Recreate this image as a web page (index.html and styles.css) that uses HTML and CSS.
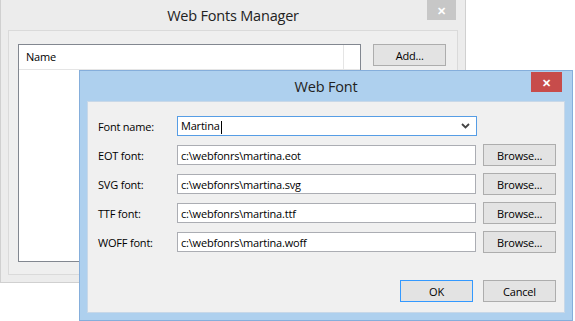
FILE: index.html
```html
<!DOCTYPE html>
<html lang="en">

<head>
    <meta charset="UTF-8">
    <title>Web Fonts Manager</title>
    <link rel="stylesheet" href="styles.css">
</head>

<body>
    <div class="desktop">
        <div class="window manager">
            <div class="titlebar">
                <span class="title">Web Fonts Manager</span>
                <span class="close">&#x2715;</span>
            </div>
            <div class="client">
                <div class="list">
                    <div class="list-head">
                        <span class="col">Name</span>
                        <span class="col-rest"></span>
                    </div>
                </div>
                <button type="button" class="btn add">Add...</button>
            </div>
        </div>

        <div class="window dialog">
            <div class="titlebar">
                <span class="title">Web Font</span>
                <span class="close">&#x2715;</span>
            </div>
            <div class="client">
                <div class="row">
                    <label for="fontName">Font name:</label>
                    <div class="combo">
                        <span class="value">Martina<span class="caret"></span></span>
                        <svg class="arrow" width="9" height="6" viewBox="0 0 9 6">
                            <path d="M1 1 L4.5 4.5 L8 1" fill="none" stroke="#444" stroke-width="1.8" />
                        </svg>
                    </div>
                </div>
                <div class="row">
                    <label>EOT font:</label>
                    <input type="text" value="c:\webfonrs\martina.eot">
                    <button type="button" class="btn">Browse...</button>
                </div>
                <div class="row">
                    <label>SVG font:</label>
                    <input type="text" value="c:\webfonrs\martina.svg">
                    <button type="button" class="btn">Browse...</button>
                </div>
                <div class="row">
                    <label>TTF font:</label>
                    <input type="text" value="c:\webfonrs\martina.ttf">
                    <button type="button" class="btn">Browse...</button>
                </div>
                <div class="row">
                    <label>WOFF font:</label>
                    <input type="text" value="c:\webfonrs\martina.woff">
                    <button type="button" class="btn">Browse...</button>
                </div>
                <div class="actions">
                    <button type="button" class="btn ok">OK</button>
                    <button type="button" class="btn">Cancel</button>
                </div>
            </div>
        </div>
    </div>
</body>

</html>
```

FILE: styles.css
```css
body {
    margin: 0;
    background: #fff;
    font-family: "Open Sans", "Noto Sans", Arial, sans-serif;
    font-size: 11px;
    letter-spacing: -0.2px;
    color: #000;
}

.desktop {
    position: relative;
    width: 575px;
    height: 321px;
    overflow: hidden;
}

.window {
    position: absolute;
    box-sizing: border-box;
    display: flex;
    flex-direction: column;
}

.titlebar {
    position: relative;
    display: flex;
    justify-content: center;
    align-items: center;
}

.title {
    font-size: 14.5px;
    color: #222;
}

.close {
    position: absolute;
    top: 0;
    display: flex;
    justify-content: center;
    align-items: center;
    color: #fff;
    font-size: 11px;
    font-weight: bold;
}

/* back window */

.manager {
    left: 0;
    top: 0;
    width: 466px;
    height: 283px;
    background: #ececec;
    border: 1px solid #d0d0d0;
    border-top: none;
    padding: 0 7px 7px 7px;
}

.manager .titlebar {
    height: 30px;
}

.manager .close {
    right: 2px;
    width: 29px;
    height: 20px;
    background: #c7c7c7;
}

.manager .client {
    flex: 1;
    display: flex;
    align-items: flex-start;
    gap: 12px;
    border: 1px solid #dadada;
    background: #efefef;
    padding: 13px 11px 12px 9px;
}

.list {
    width: 345px;
    height: 218px;
    box-sizing: border-box;
    background: #fff;
    border: 1px solid #828790;
}

.list-head {
    display: flex;
    height: 24px;
    border-bottom: 1px solid #e5e5e5;
}

.col {
    width: 317px;
    padding-left: 7px;
    line-height: 24px;
    font-size: 11px;
    border-right: 1px solid #e5e5e5;
}

.btn {
    box-sizing: border-box;
    width: 73px;
    height: 22px;
    padding: 0;
    background: #e3e3e3;
    border: 1px solid #adadad;
    font-family: inherit;
    font-size: 11px;
    letter-spacing: -0.2px;
    color: #000;
}

/* front dialog */

.dialog {
    left: 79px;
    top: 70px;
    width: 494px;
    height: 251px;
    background: #aed0ee;
    border: 1px solid #85aedb;
    padding: 0 7px 7px 7px;
}

.dialog .titlebar {
    height: 30px;
}

.dialog .close {
    right: 3px;
    top: 1px;
    width: 31px;
    height: 20px;
    background: #c74c4b;
}

.dialog .client {
    flex: 1;
    background: #f0f0f0;
    border: 1px solid #c8d8e8;
    padding: 14px 8px 0 10px;
    display: flex;
    flex-direction: column;
    gap: 9px;
}

.row {
    display: flex;
    align-items: center;
    height: 20px;
    gap: 7px;
}

.row label {
    width: 72px;
    flex: none;
}

.row input,
.combo {
    box-sizing: border-box;
    width: 300px;
    height: 20px;
    margin: 0;
    padding: 0 0 0 3px;
    border: 1px solid #abadb3;
    background: #fff;
    font-family: inherit;
    font-size: 11px;
    letter-spacing: -0.2px;
    color: #000;
}

.combo {
    display: flex;
    align-items: center;
    justify-content: space-between;
    border-color: #569de5;
    padding-right: 6px;
}

.caret {
    display: inline-block;
    width: 1px;
    height: 13px;
    background: #000;
    vertical-align: middle;
    margin-left: 1px;
}

.actions {
    display: flex;
    justify-content: flex-end;
    gap: 10px;
    margin-top: 19px;
}

.ok {
    border-color: #3399ff;
}
```
